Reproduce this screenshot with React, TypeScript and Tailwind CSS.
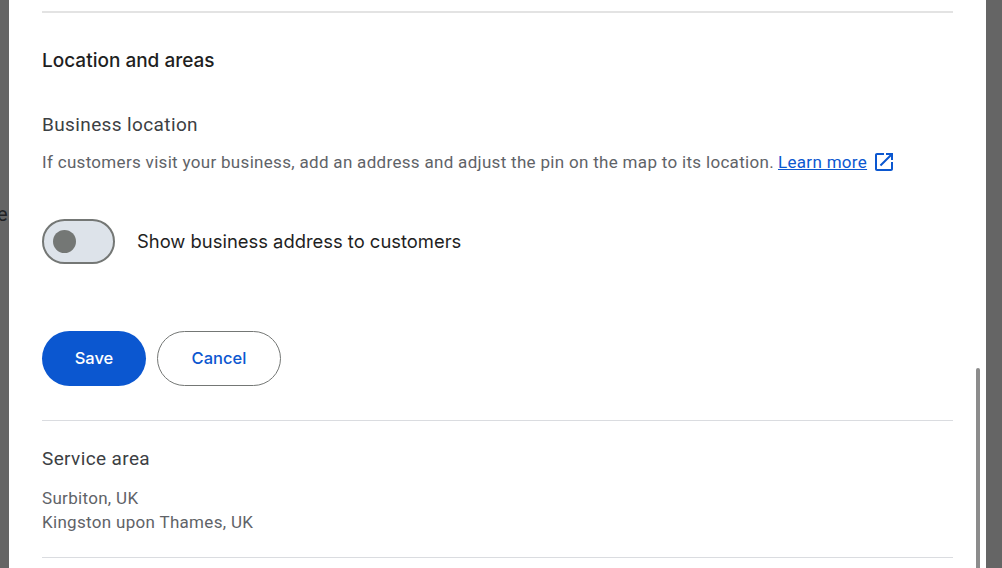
export default function App() {
  return (
    <div className="flex h-[568px] w-[1002px] overflow-hidden bg-[#656565] font-['Roboto',sans-serif]">
      {/* Dimmed page behind the dialog */}
      <div className="relative w-[9px] shrink-0 overflow-hidden">
        <span className="absolute left-[-3px] top-[202px] text-[20px] leading-6 text-[#202124]">e</span>
      </div>

      {/* Dialog */}
      <div className="relative w-[977px] shrink-0 bg-white px-[33px]">
        <div className="mt-[11px] h-[2px] bg-[#e3e3e3]" />

        <h2 className="mt-[36px] text-[19px] font-medium leading-6 text-[#1f1f1f] font-['Inter',sans-serif]">
          Location and areas
        </h2>

        <h3 className="mt-[40px] text-[19px] leading-6 text-[#3c4043] tracking-[0.38px]">Business location</h3>

        <p className="mt-[13px] flex items-center text-[17px] leading-6 tracking-[0.31px] text-[#5f6368]">
          If customers visit your business, add an address and adjust the pin on the map to its location.
          <a href="#" className="ml-[4px] text-[#0b57d0] underline">
            Learn more
          </a>
          <svg viewBox="0 0 24 24" className="ml-[5px] h-6 w-6 fill-[#0b57d0]">
            <path d="M19 19H5V5h7V3H5c-1.11 0-2 .9-2 2v14c0 1.1.89 2 2 2h14c1.1 0 2-.9 2-2v-7h-2v7zM14 3v2h3.59l-9.83 9.83 1.41 1.41L19 6.41V10h2V3h-7z" />
          </svg>
        </p>

        <div className="mt-[45px] flex items-center gap-[22px]">
          <div className="flex h-[45px] w-[73px] items-center rounded-full border-2 border-[#747775] bg-[#dde3ea] pl-[9px]">
            <div className="h-[23px] w-[23px] rounded-full bg-[#747775]" />
          </div>
          <span className="mb-[2px] text-[18.4px] leading-6 text-[#1f1f1f] font-['Inter',sans-serif]">
            Show business address to customers
          </span>
        </div>

        <div className="mt-[67px] flex gap-[11px] font-['Inter',sans-serif]">
          <button className="h-[55px] w-[104px] rounded-full bg-[#0b57d0] text-[16.5px] font-medium text-white">Save</button>
          <button className="h-[55px] w-[124px] rounded-full border border-[#747775] bg-white text-[16.5px] font-medium text-[#0b57d0]">
            Cancel
          </button>
        </div>

        <div className="mt-[34px] h-px bg-[#dadce0]" />

        <h3 className="mt-[26px] text-[19px] leading-6 text-[#3c4043] tracking-[0.38px]">Service area</h3>

        <div className="mt-[15px] text-[17px] leading-6 tracking-[0.31px] text-[#5f6368]">
          <p>Surbiton, UK</p>
          <p>Kingston upon Thames, UK</p>
        </div>

        <div className="mt-[23px] h-px bg-[#dadce0]" />

        {/* Scrollbar thumb */}
        <div className="absolute left-[967px] top-[368px] h-[200px] w-1 rounded-t-sm bg-[#8c8c8c]" />
      </div>
    </div>
  );
}
